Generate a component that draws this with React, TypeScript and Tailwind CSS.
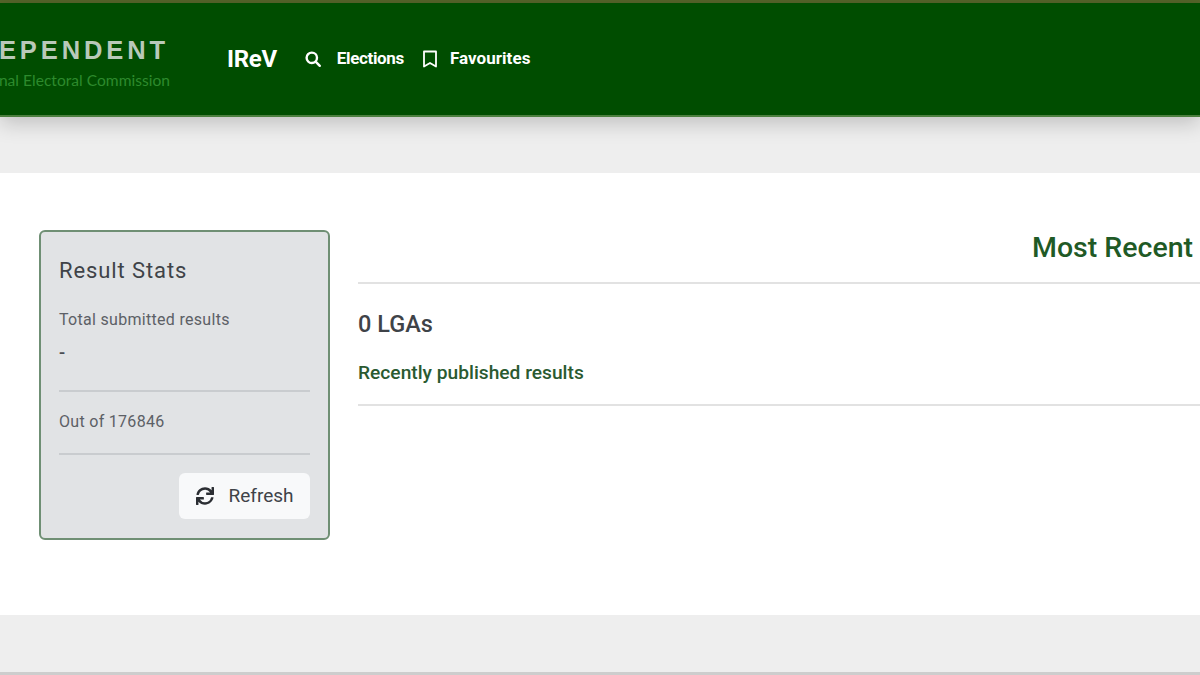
import { FaSync } from "react-icons/fa";

const roboto = { fontFamily: "Roboto, sans-serif" };

export default function App() {
  return (
    <div className="h-[675px] w-[1200px] overflow-hidden bg-white flex flex-col" style={roboto}>
      <div className="h-[3px] shrink-0 bg-[#56652a]" />
      <header className="relative z-10 h-[114px] shrink-0 bg-[#004d00] border-b-2 border-[#4c7f3f] shadow-[0_6px_20px_rgba(0,0,0,0.2)] flex items-center">
        <div className="w-[170px] shrink-0 overflow-hidden flex flex-col items-end mt-[5px]">
          <div className="whitespace-nowrap font-['Liberation_Sans',sans-serif] font-bold text-[25.5px] leading-[30px] tracking-[3.9px] text-[#b9c9b9] mr-[1px]">INDEPENDENT</div>
          <div className="whitespace-nowrap font-['Lato',sans-serif] text-[15.6px] leading-[18px] text-[#2d8a2d] mt-[6px]">National Electoral Commission</div>
        </div>
        <div className="ml-[57px] text-[24px] font-bold text-white tracking-[-0.3px] leading-none">IReV</div>
        <nav className="ml-[27px] flex items-center text-white">
          <svg width="18" height="18" viewBox="0 0 18 18" fill="none" stroke="#fff" strokeWidth="2.4" strokeLinecap="round">
            <circle cx="7.8" cy="7.8" r="5.2" />
            <path d="M11.6 11.6 L15.8 15.8" />
          </svg>
          <span className="ml-[15px] text-[17px] font-bold tracking-[-0.35px]">Elections</span>
          <svg className="ml-[18px]" width="16" height="18" viewBox="0 0 16 18" fill="none" stroke="#fff" strokeWidth="1.8" strokeLinejoin="round">
            <path d="M2 1.5 H14 V16.5 L8 13 L2 16.5 Z" />
          </svg>
          <span className="ml-[12px] text-[17px] font-bold tracking-[0.05px]">Favourites</span>
        </nav>
      </header>
      <div className="h-[56px] shrink-0 bg-[#eeeeee]" />
      <main className="h-[442px] shrink-0 bg-white flex items-start pl-[39px] pt-[57px]">
        <section className="w-[291px] h-[310px] shrink-0 rounded-[6px] border-2 border-[#6f8f74] bg-[#e1e3e5] pt-[24px] px-[18px] flex flex-col">
          <h2 className="text-[22px] tracking-[0.9px] leading-[30px] text-[#3f4348] font-normal">Result Stats</h2>
          <p className="mt-[24px] text-[16px] tracking-[0.3px] leading-[20px] text-[#5c6066]">Total submitted results</p>
          <p className="mt-[12px] text-[18px] font-medium leading-[22px] text-[#4a4d52]">-</p>
          <div className="mt-[26px] border-t-2 border-[#c9cccf]" />
          <p className="mt-[20px] text-[16px] tracking-[0.3px] leading-[20px] text-[#5c6066]">Out of 176846</p>
          <div className="mt-[21px] border-t-2 border-[#c9cccf]" />
          <div className="mt-[18px] flex justify-end">
            <button className="w-[131px] h-[46px] rounded-[6px] bg-[#f8f9fa] flex items-center justify-center gap-[15px] text-[19px] text-[#3f4348]">
              <FaSync size={18} className="text-[#2b2e33]" />
              <span>Refresh</span>
            </button>
          </div>
        </section>
        <section className="ml-[28px] flex-1 min-w-0">
          <h1 className="pl-[674px] pt-[1px] text-[28.5px] leading-[33px] font-medium text-[#1f5a26] whitespace-nowrap">Most Recent</h1>
          <div className="mt-[18px] h-[2px] bg-[#e2e2e2]" />
          <h3 className="mt-[26px] text-[23.5px] leading-[28px] font-medium text-[#3f4348]">0 LGAs</h3>
          <p className="mt-[23px] text-[19.2px] leading-[24px] font-medium text-[#2a5a31]">Recently published results</p>
          <div className="mt-[19px] h-[2px] bg-[#e2e2e2]" />
        </section>
      </main>
      <div className="h-[57px] shrink-0 bg-[#eeeeee]" />
      <div className="h-[3px] shrink-0 bg-[#cdcdcd]" />
    </div>
  );
}
